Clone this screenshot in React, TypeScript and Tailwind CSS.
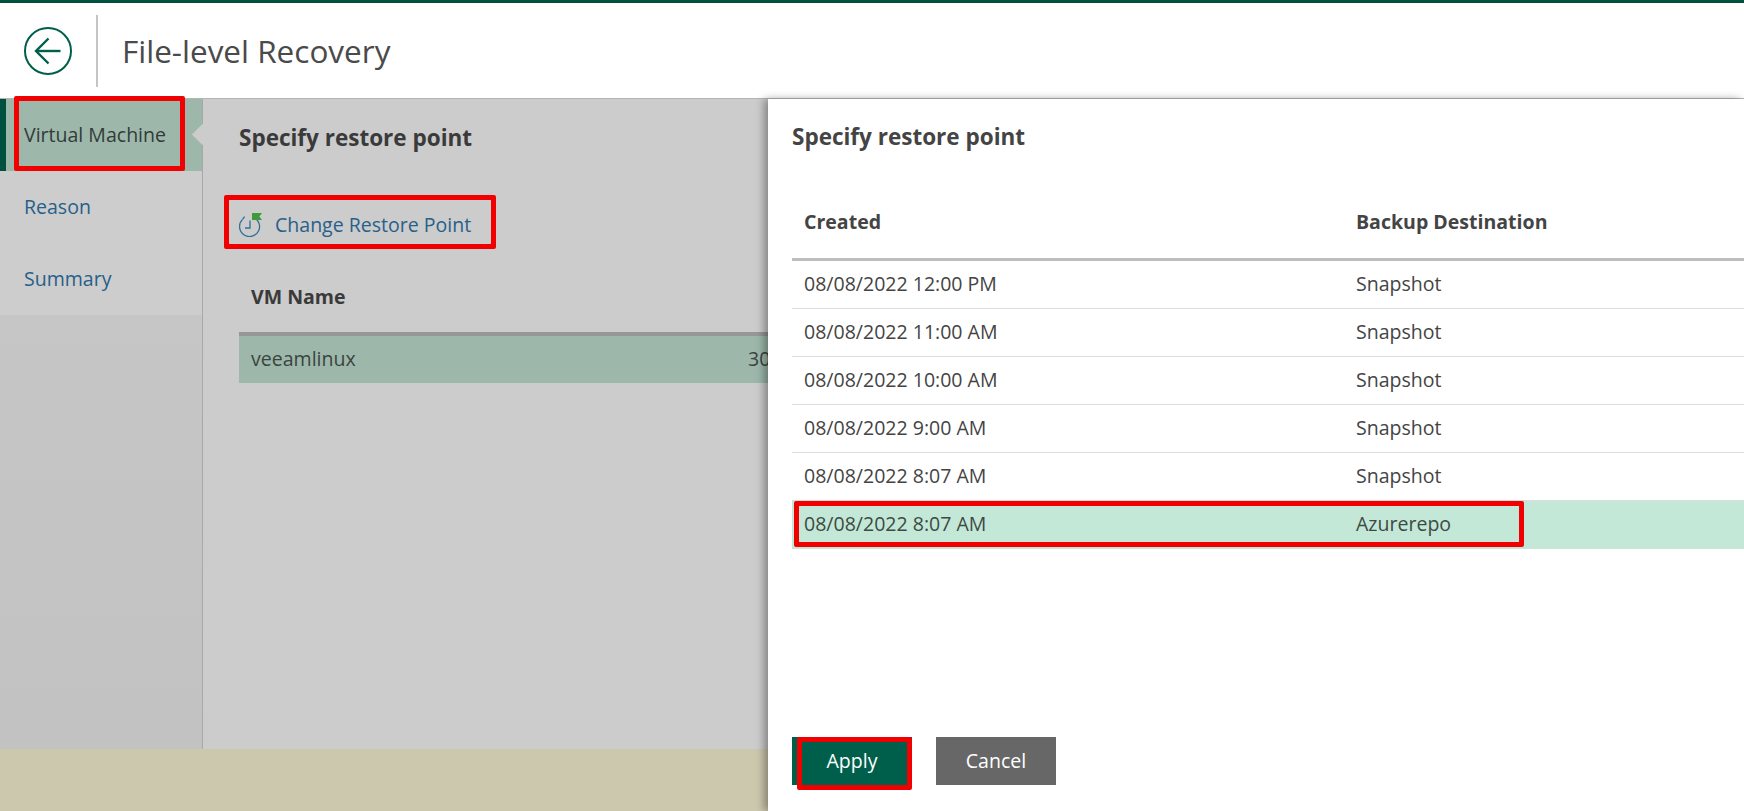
const rows = [
  { created: "08/08/2022 12:00 PM", dest: "Snapshot" },
  { created: "08/08/2022 11:00 AM", dest: "Snapshot" },
  { created: "08/08/2022 10:00 AM", dest: "Snapshot" },
  { created: "08/08/2022 9:00 AM", dest: "Snapshot" },
  { created: "08/08/2022 8:07 AM", dest: "Snapshot" },
];

function RedBox({ className }: { className: string }) {
  return <div className={`pointer-events-none absolute rounded-[2px] border-[5px] border-[#f00000] ${className}`} />;
}

function RestoreIcon() {
  return (
    <svg width="24" height="24" viewBox="0 0 24 24" fill="none" className="shrink-0">
      <path d="M13 3.8A10 10 0 1 1 3.5 6.4" stroke="#2f6f97" strokeWidth="1.3" />
      <path d="M3.5 6.4 5.6 3.6" stroke="#2f6f97" strokeWidth="1.3" />
      <path d="M11 7.5V15H6" stroke="#2f6f97" strokeWidth="1.3" />
      <path d="M13 0h10l-2.6 3.4L23 7H13z" fill="#3f9a3c" />
    </svg>
  );
}

export default function App() {
  return (
    <div className="relative flex h-[811px] w-[1744px] flex-col overflow-hidden bg-white font-['Open_Sans',sans-serif] text-[19.55px] text-[#444444]">
      <div className="h-[3px] bg-[#00503f]" />

      <header className="flex h-[96px] items-center border-b border-[#b5b5b5] bg-white pl-6">
        <button className="flex h-12 w-12 items-center justify-center rounded-full border-2 border-[#005f4b]">
          <svg width="28" height="28" viewBox="0 0 28 28" fill="none" stroke="#005f4b" strokeWidth="2.4">
            <path d="M26.5 14H2" />
            <path d="M14.5 1.5 2 14l12.5 12.5" />
          </svg>
        </button>
        <div className="ml-[24px] h-[72px] w-0.5 bg-[#c4c4c4]" />
        <h1 className="ml-6 text-[31.5px] leading-none font-normal text-[#4a4a4a]">File-level Recovery</h1>
      </header>

      <div className="flex min-h-0 flex-1 flex-col">
        <div className="flex min-h-0 flex-1">
          <nav className="flex w-[203px] shrink-0 flex-col border-r border-[#a8a8a8] bg-gradient-to-b from-[#c8c8c8] to-[#c2c2c2]">
            <div className="relative flex h-[72px] items-center border-l-[6px] border-[#00503f] bg-[#9db8ab] pl-[18px] text-[#333b38]">
              Virtual Machine
              <span className="absolute top-[28px] right-[-1px] h-[15px] w-[15px] translate-x-[7px] rotate-45 bg-[#cccccc]" />
            </div>
            <div className="bg-[#cdcdcd]">
              <div className="flex h-[72px] items-center pl-6 text-[#27608a]">Reason</div>
              <div className="flex h-[72px] items-center pl-6 text-[#27608a]">Summary</div>
            </div>
          </nav>

          <main className="min-w-0 flex-1 bg-[#cccccc] pl-9">
            <h2 className="mt-[25px] text-[22.5px] leading-7 font-bold text-[#3a3a3a]">Specify restore point</h2>
            <div className="mt-[59px] flex h-7 items-center gap-3 text-[#27608a]">
              <RestoreIcon />
              Change Restore Point
            </div>
            <div className="mt-[33px] flex h-[60px] items-center pb-2.5 pl-3 font-bold text-[#3a3a3a]">VM Name</div>
            <div className="grid h-[51px] grid-cols-[497px_1fr] items-center border-t-4 border-[#979797] bg-[#9db8ab] pb-px pl-3 text-[#3a4440]">
              <span>veeamlinux</span>
              <span>30</span>
            </div>
          </main>
        </div>
        <footer className="h-[62px] bg-[#ccc8ae]" />
      </div>

      <aside className="absolute top-[99px] right-0 bottom-0 left-[768px] flex flex-col bg-white pl-6 shadow-[-4px_0_8px_rgba(0,0,0,0.35)]">
        <h2 className="mt-6 text-[22.5px] leading-7 font-bold text-[#444444]">Specify restore point</h2>
        <div className="mt-[47px] grid h-[63px] grid-cols-[552px_1fr] items-center border-b-[3px] border-[#bdbdbd] pb-3 pl-3 font-bold">
          <span>Created</span>
          <span>Backup Destination</span>
        </div>
        {rows.map((r) => (
          <div key={r.created + r.dest} className="grid h-12 grid-cols-[552px_1fr] items-center border-b border-[#dddddd] pb-px pl-3">
            <span>{r.created}</span>
            <span>{r.dest}</span>
          </div>
        ))}
        <div className="grid h-12 grid-cols-[552px_1fr] items-center bg-[#c3e8d7] pb-0.5 pl-3 text-[#3d4a44]">
          <span>08/08/2022 8:07 AM</span>
          <span>Azurerepo</span>
        </div>
        <div className="mt-auto mb-[26px] flex gap-6">
          <button className="h-12 w-[120px] bg-[#005f4b] text-white">Apply</button>
          <button className="h-12 w-[120px] bg-[#676767] text-white">Cancel</button>
        </div>
      </aside>

      <RedBox className="top-[96px] left-[14px] h-[75px] w-[171px]" />
      <RedBox className="top-[195px] left-[224px] h-[54px] w-[272px]" />
      <RedBox className="top-[501px] left-[794px] h-[46px] w-[730px]" />
      <RedBox className="top-[737px] left-[797px] h-[53px] w-[115px]" />
    </div>
  );
}
